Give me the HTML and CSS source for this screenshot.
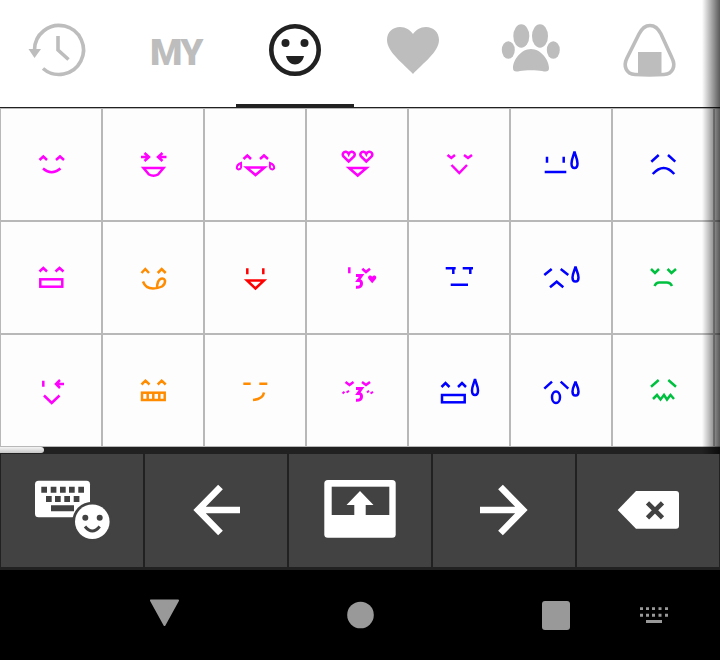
FILE: index.html
```html
<!DOCTYPE html>
<html lang="en">
<head>
    <meta charset="UTF-8">
    <meta name="viewport" content="width=device-width, initial-scale=1.0">
    <title>Emoticon Keyboard</title>
    <link rel="stylesheet" href="styles.css">
</head>
<body>
    <div class="panel">
        <div class="tabs">
            <div class="tab">
                <svg viewBox="0 0 118 104">
                    <path class="line-grey" d="M34.5 50A24.5 24.5 0 1 1 43 68.5"/>
                    <path class="fill-grey" d="M28.5 49H41L34.5 58Z"/>
                    <path class="line-grey" d="M58 36V50L68.5 59.5"/>
                </svg>
            </div>
            <div class="tab tab-text">MY</div>
            <div class="tab active">
                <svg viewBox="0 0 118 104">
                    <circle class="line-dark" cx="59" cy="50" r="23.7"/>
                    <circle class="fill-dark" cx="49.5" cy="43" r="4"/>
                    <circle class="fill-dark" cx="68.5" cy="43" r="4"/>
                    <path class="fill-dark" d="M50 56H68C67 61 63 64.5 59 64.5S51 61 50 56Z"/>
                </svg>
            </div>
            <div class="tab">
                <svg viewBox="0 0 118 104">
                    <path class="fill-grey" d="M59 74C50 64 33 52 33 40C33 32 39 27 46 27C52 27 56 30 59 34C62 30 66 27 72 27C79 27 85 32 85 40C85 52 68 64 59 74Z"/>
                </svg>
            </div>
            <div class="tab">
                <svg viewBox="0 0 118 104">
                    <ellipse class="fill-grey" cx="49.3" cy="36" rx="8" ry="11.8"/>
                    <ellipse class="fill-grey" cx="68" cy="36" rx="8" ry="11.8"/>
                    <ellipse class="fill-grey" cx="36.3" cy="50" rx="6.5" ry="8.7"/>
                    <ellipse class="fill-grey" cx="81.3" cy="50" rx="6.5" ry="8.7"/>
                    <path class="fill-grey" d="M59 49C49 49 41 60 41 68C41 72 44 72 48 71C53 70 65 70 70 71C74 72 77 72 77 68C77 60 69 49 59 49Z"/>
                </svg>
            </div>
            <div class="tab">
                <svg viewBox="0 0 118 104">
                    <path class="line-grey" d="M60 25.5C65 25.5 68 28 71 34L82 58C86 66 83 74 74 74.5C64 75 55 75 45 74.5C36 74 33 66 37 58L49 34C52 28 55 25.5 60 25.5Z"/>
                    <rect class="fill-grey" x="48" y="52" width="23.5" height="23"/>
                </svg>
            </div>
        </div>

        <div class="grid-scroll">
            <div class="grid">
                <!-- row 1 -->
                <div class="cell pink"><svg viewBox="0 0 100 111"><g transform="translate(-1 -1)">
                    <path d="M39.5 52L43.3 48.5L47 52M56 52L60 48.5L64 52M43 60.5Q51.5 68 60.5 60.5"/>
                </g></svg></div>
                <div class="cell pink"><svg viewBox="0 0 100 111"><g transform="translate(-1 -1)">
                    <path d="M39 49H47M42.5 45L47 49L42.5 53M64.5 49H56M60.5 45L56 49L60.5 53"/>
                    <path d="M41.5 60H61.5L56 66.5Q51.5 69 47 66.5Z"/>
                </g></svg></div>
                <div class="cell pink"><svg viewBox="0 0 100 111"><g transform="translate(-1 -1)">
                    <path d="M39.5 51L43.3 47.5L47 51M56 51L60 47.5L64 51M42.5 59.5H60.5L51.5 67Z"/>
                    <path class="thin" d="M37 55C33.5 56.5 32.5 58.5 33 60.5C34 62 36.5 61.5 37 59.5C37.3 58 37 56.5 37 55ZM66 55C69.5 56.5 70.5 58.5 70 60.5C69 62 66.5 61.5 66 59.5C65.7 58 66 56.5 66 55Z"/>
                </g></svg></div>
                <div class="cell pink"><svg viewBox="0 0 100 111"><g transform="translate(-1 -1)">
                    <path d="M42.7 53.5L37.5 48.5C35.5 45.5 38 43.5 40 43.8C41.5 44 42.3 45 42.7 46C43.1 45 44 44 45.4 43.8C47.5 43.5 50 45.5 48 48.5Z"/>
                    <path d="M60.3 53.5L55.1 48.5C53.1 45.5 55.6 43.5 57.6 43.8C59.1 44 59.9 45 60.3 46C60.7 45 61.6 44 63 43.8C65.1 43.5 67.6 45.5 65.6 48.5Z"/>
                    <path d="M43 60H60.5L51.7 67.5Z"/>
                </g></svg></div>
                <div class="cell pink"><svg viewBox="0 0 100 111"><g transform="translate(-1 -1)">
                    <path d="M39.5 47L43.3 50L47 47M56 47L60 50L64 47M43.5 57L51.3 65L59 57"/>
                </g></svg></div>
                <div class="cell blue"><svg viewBox="0 0 100 111"><g transform="translate(-1 -1)">
                    <path d="M37 48.7V54.7M53.7 48.7V54.7M34.7 64H56.3"/>
                    <path d="M64.5 43.5C63.5 48 61.5 51 61.5 55.5C61.5 58.5 63 60 64.5 60C66 60 67.5 58.5 67.5 55.5C67.5 51 65.5 48 64.5 43.5Z"/>
                </g></svg></div>
                <div class="cell blue"><svg viewBox="0 0 100 111"><g transform="translate(-1 -1)">
                    <path d="M39.3 53.7L46.7 47M56 47L63.3 53.7M40.7 66Q51.7 54 62.3 66"/>
                </g></svg></div>
                <div class="cell"></div>

                <!-- row 2 -->
                <div class="cell pink"><svg viewBox="0 0 100 111"><g transform="translate(-1 -1)">
                    <path d="M39.5 50.5L43.3 47L47 50.5M55.5 50.5L59.5 47L63.5 50.5"/>
                    <rect x="40.3" y="58.3" width="22" height="7.4"/>
                </g></svg></div>
                <div class="cell orange"><svg viewBox="0 0 100 111"><g transform="translate(-1 -1)">
                    <path d="M39.5 52L43.3 48L47 52M55.7 52L59.7 48L63.7 52"/>
                    <path d="M41 60.5Q43.5 67.5 51 67.5Q56 67.5 60 65.5Q63.5 63 63 59.5Q62 57 59 57.8Q55.5 59 55 66.5"/>
                </g></svg></div>
                <div class="cell red"><svg viewBox="0 0 100 111"><g transform="translate(-1 -1)">
                    <path d="M43.3 47.3V53.3M59.3 47.3V53.3M43 59.5H60L51.5 67.5Z"/>
                </g></svg></div>
                <div class="cell pink"><svg viewBox="0 0 100 111"><g transform="translate(-1 -1)">
                    <path d="M43.3 46.3V52.3M56.3 47.7L60 51L64 47.7"/>
                    <path class="bold" d="M50 54.5H55.5L52 59.5H53Q55.7 59.5 55.5 63Q55.3 66.5 50 66.3"/>
                    <path class="solid" d="M66.2 62.3L62.6 58C61.2 55.8 63 54.2 64.4 54.4C65.4 54.5 66 55.2 66.2 55.9C66.4 55.2 67 54.5 68 54.4C69.4 54.2 71.2 55.8 69.8 58Z"/>
                </g></svg></div>
                <div class="cell blue"><svg viewBox="0 0 100 111"><g transform="translate(-1 -1)">
                    <path d="M37.7 47.3H47.7M45.3 47.3V53M54.7 47.3H65M62.3 47.3V53M42.7 63.7H60"/>
                </g></svg></div>
                <div class="cell blue"><svg viewBox="0 0 100 111"><g transform="translate(-1 -1)">
                    <path d="M34.3 54L41.7 48M50.7 48L58.3 54M40 66.3L46.7 60.7L53.3 66.3"/>
                    <path d="M65.5 45.5C64.5 50 62.5 52.5 62.5 56.5C62.5 59.5 64 60.5 65.5 60.5C67 60.5 68.5 59.5 68.5 56.5C68.5 52.5 66.5 50 65.5 45.5Z"/>
                </g></svg></div>
                <div class="cell green"><svg viewBox="0 0 100 111"><g transform="translate(-1 -1)">
                    <path d="M39 48L43 52L47 48M55.5 48L59.5 52L64 48M42.5 65Q44 61.5 47 61.5H55Q58.5 61.5 60 65"/>
                </g></svg></div>
                <div class="cell"></div>

                <!-- row 3 -->
                <div class="cell pink"><svg viewBox="0 0 100 111"><g transform="translate(-1 -1)">
                    <path d="M43.3 46.7V52.7M64 50H56M60 46L56 50L60 54M44 61.5L51.7 69L59.5 61.5"/>
                </g></svg></div>
                <div class="cell orange"><svg viewBox="0 0 100 111"><g transform="translate(-1 -1)">
                    <path d="M39.5 50.5L43.5 46.7L47.5 50.5M55.7 50.5L59.7 46.7L63.7 50.5"/>
                    <rect x="40" y="58.7" width="22.7" height="7.3"/>
                    <path d="M45.7 58.7V66M51.3 58.7V66M57.3 58.7V66"/>
                </g></svg></div>
                <div class="cell orange"><svg viewBox="0 0 100 111"><g transform="translate(-1 -1)">
                    <path d="M39.3 49.7H46.7M55.3 49.7H63.3M60 58.5Q59 65 49 66"/>
                </g></svg></div>
                <div class="cell pink"><svg viewBox="0 0 100 111"><g transform="translate(-1 -1)">
                    <path d="M39.5 48L43.5 51L47.5 48M56 48L60 51L64 48"/>
                    <path class="bold" d="M50 54.5H55.5L52 59.5H53Q55.7 59.5 55.5 63Q55.3 66.5 50 66.3"/>
                    <path class="thin" d="M36.5 59.5L38.5 57.8M40.5 58.5L43 56.8M61 58.5L63 56.8M64.5 59.5L67 57.8"/>
                </g></svg></div>
                <div class="cell blue"><svg viewBox="0 0 100 111"><g transform="translate(-1 -1)">
                    <path d="M33.5 53L37.5 49L41.5 53M50 53L54 49L58 53"/>
                    <rect x="34" y="61" width="22.7" height="7.3"/>
                    <path d="M67 45C66 49.5 64 52 64 56.5C64 59.5 65.5 61 67 61C68.5 61 70 59.5 70 56.5C70 52 68 49.5 67 45Z"/>
                </g></svg></div>
                <div class="cell blue"><svg viewBox="0 0 100 111"><g transform="translate(-1 -1)">
                    <path d="M34.3 54.7L42 47.7M50.7 47.7L58.3 54.7"/>
                    <ellipse cx="46" cy="63.3" rx="4" ry="5.8"/>
                    <path d="M65.5 47.5C64.5 51.5 62.5 53.5 62.5 57.5C62.5 60.5 64 61.5 65.5 61.5C67 61.5 68.5 60.5 68.5 57.5C68.5 53.5 66.5 51.5 65.5 47.5Z"/>
                </g></svg></div>
                <div class="cell green"><svg viewBox="0 0 100 111"><g transform="translate(-1 -1)">
                    <path d="M39 52.7L46.7 46M56.3 46L64 52.7M41 65L45 61L48.5 65.5L52 61L55 65.5L58.5 61L62 65"/>
                </g></svg></div>
                <div class="cell"></div>
            </div>
        </div>

        <div class="track"><div class="thumb"></div></div>
        <div class="fade"></div>
    </div>

    <div class="keys">
        <div class="key">
            <svg viewBox="1 454 142 113">
                <rect class="fill-white" x="35" y="480.7" width="55" height="36.6" rx="3.5"/>
                <path class="fill-key" d="M41.3 486.7h5.7v6h-5.7zM50.7 486.7h5.7v6h-5.7zM60 486.7h5.7v6h-5.7zM69 486.7h5.7v6h-5.7zM78.3 486.7h5.7v6h-5.7zM46 496h5.7v6h-5.7zM55 496h5.7v6h-5.7zM64.3 496h5.7v6h-5.7zM73.7 496h5.7v6h-5.7zM51 505.3h23v6h-23z"/>
                <circle class="fill-key" cx="92.3" cy="521.7" r="20"/>
                <circle class="fill-white" cx="92.3" cy="521.7" r="17.3"/>
                <circle class="fill-key" cx="85.3" cy="517.7" r="3"/>
                <circle class="fill-key" cx="99.7" cy="517.7" r="3"/>
                <path class="line-key" d="M85 526.5Q92.3 535.5 99.7 526.5"/>
            </svg>
        </div>
        <div class="key">
            <svg viewBox="145 454 142 113">
                <path class="line-white" d="M220.5 487L198 510L220.5 533M198 510H240"/>
            </svg>
        </div>
        <div class="key">
            <svg viewBox="289 454 142 113">
                <rect class="fill-white" x="324.3" y="480" width="71.4" height="57.7" rx="3.5"/>
                <rect class="fill-key" x="331.7" y="486.7" width="57.6" height="28.3"/>
                <path class="fill-white" d="M360 491L373.5 505H365.7V515H354.3V505H346.5Z"/>
            </svg>
        </div>
        <div class="key">
            <svg viewBox="433 454 142 113">
                <path class="line-white" d="M500.5 487L523 510L500.5 533M523 510H480"/>
            </svg>
        </div>
        <div class="key">
            <svg viewBox="577 454 142 113">
                <path class="fill-white" d="M617.7 510L636 491H676A3 3 0 0 1 679 494V525.7A3 3 0 0 1 676 528.7H636Z"/>
                <path class="cross" d="M647.5 502.8L662.5 517.8M662.5 502.8L647.5 517.8"/>
            </svg>
        </div>
    </div>

    <div class="sysnav">
        <svg viewBox="0 570 720 90">
            <path class="sys" d="M151 600.5H178L164.5 625Z"/>
            <circle class="sys-fill" cx="360.5" cy="615" r="13.3"/>
            <rect class="sys-fill" x="542" y="601" width="28" height="29" rx="3"/>
            <path class="sys-fill" d="M640 607.3h3v2.7h-3zM646 607.3h3v2.7h-3zM652 607.3h3v2.7h-3zM658.5 607.3h3v2.7h-3zM665 607.3h3v2.7h-3zM640 613.7h3v3h-3zM646 613.7h3v3h-3zM652 613.7h3v3h-3zM658.5 613.7h3v3h-3zM665 613.7h3v3h-3zM646 620h16v3h-16z"/>
        </svg>
    </div>
</body>
</html>
```

FILE: styles.css
```css
body {
    margin: 0;
    width: 720px;
    height: 660px;
    overflow: hidden;
    background-color: #000;
    font-family: Roboto, sans-serif;
}
svg {
    display: block;
}
.panel {
    position: relative;
    background-color: #fff;
}

/* tabs */
.tabs {
    display: flex;
    height: 107px;
    border-bottom: 1px solid #212121;
}
.tab {
    width: 118px;
    height: 104px;
    border-bottom: 3px solid transparent;
}
.tab svg {
    width: 118px;
    height: 104px;
}
.tab.active {
    border-bottom-color: #212121;
}
.tab-text {
    display: flex;
    justify-content: center;
    align-items: center;
    padding-right: 2px;
    width: 116px;
    font-size: 37px;
    font-weight: 900;
    letter-spacing: -1.5px;
    color: #bdbdbd;
}
.line-grey {
    fill: none;
    stroke: #bdbdbd;
    stroke-width: 3.6;
}
.fill-grey {
    fill: #bdbdbd;
}
.line-dark {
    fill: none;
    stroke: #212121;
    stroke-width: 4.6;
}
.fill-dark {
    fill: #212121;
}

/* emoticon grid */
.grid-scroll {
    height: 339px;
    overflow: hidden;
}
.grid {
    display: grid;
    grid-template-columns: repeat(8, 102px);
    grid-auto-rows: 113px;
    width: 816px;
}
.cell {
    border: 1px solid #b8b8b8;
    background-color: #fdfdfd;
}
.cell svg {
    width: 100px;
    height: 111px;
    fill: none;
    stroke: currentColor;
    stroke-width: 2.5;
}
.cell .thin {
    stroke-width: 2;
}
.cell .bold {
    stroke-width: 3;
}
.cell .solid {
    fill: currentColor;
    stroke: none;
}
.pink {
    color: #ff00ff;
}
.blue {
    color: #0000ff;
}
.orange {
    color: #ff8c00;
}
.red {
    color: #ff0000;
}
.green {
    color: #00c040;
}

/* scrollbar */
.track {
    height: 7px;
    background-color: #212121;
}
.thumb {
    width: 44px;
    height: 6px;
    border-radius: 0 3px 3px 0;
    background: linear-gradient(#f4f4f4, #c8c8c8);
}
.fade {
    position: absolute;
    top: 0;
    right: 0;
    bottom: 0;
    width: 18px;
    background: linear-gradient(to right, rgba(0, 0, 0, 0), rgba(0, 0, 0, 0.65));
}

/* bottom keys */
.keys {
    display: flex;
    padding-bottom: 3px;
    background-color: #212121;
}
.key {
    width: 142px;
    height: 113px;
    border-left: 1px solid #212121;
    border-right: 1px solid #212121;
    background-color: #424242;
}
.key svg {
    width: 142px;
    height: 113px;
}
.fill-white {
    fill: #fff;
}
.fill-key {
    fill: #424242;
}
.line-white {
    fill: none;
    stroke: #fff;
    stroke-width: 6.6;
}
.line-key {
    fill: none;
    stroke: #424242;
    stroke-width: 3;
}
.cross {
    fill: none;
    stroke: #424242;
    stroke-width: 4.6;
}

/* system nav */
.sysnav svg {
    width: 720px;
    height: 90px;
}
.sys {
    fill: #999;
    stroke: #999;
    stroke-width: 2;
    stroke-linejoin: round;
}
.sys-fill {
    fill: #999;
}
```
